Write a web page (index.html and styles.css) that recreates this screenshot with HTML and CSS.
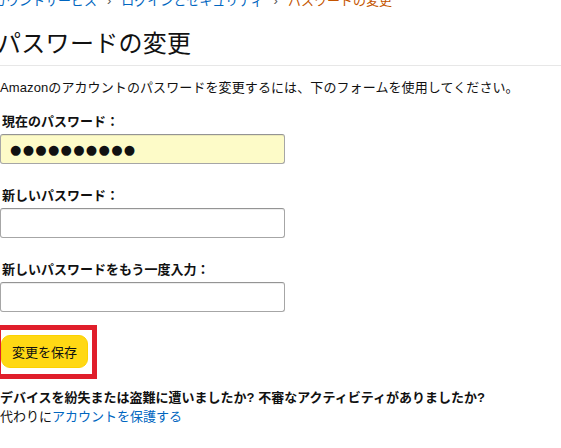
FILE: index.html
```html
<!DOCTYPE html>
<html lang="ja">
<head>
<meta charset="utf-8">
<title>パスワードの変更</title>
<link rel="stylesheet" href="styles.css">
</head>
<body>
<div class="page">
  <nav class="crumbs">
    <a class="crumb" href="#">アカウントサービス</a>
    <span class="sep">›</span>
    <a class="crumb" href="#">ログインとセキュリティ</a>
    <span class="sep">›</span>
    <span class="crumb current">パスワードの変更</span>
  </nav>
  <div class="header">
    <h1 class="title">パスワードの変更</h1>
  </div>
  <p class="desc">Amazonのアカウントのパスワードを変更するには、下のフォームを使用してください。</p>
  <form class="form">
    <label class="label first">現在のパスワード：</label>
    <input class="field filled" type="text" value="●●●●●●●●●●" readonly>
    <label class="label">新しいパスワード：</label>
    <input class="field" type="password">
    <label class="label">新しいパスワードをもう一度入力：</label>
    <input class="field" type="password">
    <div class="save-wrap">
      <button class="save" type="button">変更を保存</button>
      <span class="highlight"></span>
    </div>
  </form>
  <p class="lost">デバイスを紛失または盗難に遭いましたか? 不審なアクティビティがありましたか?</p>
  <p class="protect">代わりに<a href="#" class="link">アカウントを保護する</a></p>
</div>
</body>
</html>
```
FILE: styles.css
```css
html, body {
  margin: 0;
  padding: 0;
  background: #fff;
}
body {
  font-family: "Liberation Sans", "Noto Sans CJK JP", sans-serif;
  font-size: 13px;
  color: #111;
  overflow: hidden;
}
.page {
  width: 600px;
}
.crumbs {
  margin: -9px 0 0 -20px;
  line-height: 19px;
  white-space: nowrap;
  display: flex;
  align-items: center;
}
.crumb {
  color: #0066c0;
  text-decoration: none;
}
.crumb.current {
  color: #c45500;
}
.sep {
  color: #555;
  padding: 0 10px;
}
.header {
  margin-top: 19px;
  border-bottom: 1px solid #e7e7e7;
  padding-bottom: 7px;
}
.title {
  margin: 0 0 0 -3px;
  font-size: 24px;
  font-weight: 400;
  line-height: 29px;
  color: #111;
  letter-spacing: 0.3px;
}
.desc {
  margin: 12px 0 0 0;
  line-height: 19px;
  letter-spacing: 0.1px;
}
.form {
  display: flex;
  flex-direction: column;
  align-items: flex-start;
}
.label {
  display: block;
  font-weight: 700;
  line-height: 19px;
  margin: 22px 0 3px 2px;
}
.label.first {
  margin-top: 15px;
}
.field {
  box-sizing: border-box;
  width: 285px;
  height: 30px;
  margin: 0;
  padding: 3px 7px;
  border: 1px solid #a6a6a6;
  border-top-color: #949494;
  border-radius: 3px;
  background: #fff;
  box-shadow: 0 1px 0 rgba(255,255,255,.5), 0 1px 0 rgba(0,0,0,.07) inset;
  outline: none;
  font-family: "DejaVu Sans", sans-serif;
  font-size: 13px;
  color: #111;
}
.field.filled {
  background: #fdfbc8;
  font-size: 13px;
  letter-spacing: 1.3px;
  padding-left: 9px;
}
.save-wrap {
  position: relative;
  margin-top: 23px;
  margin-left: 1px;
}
.save {
  box-sizing: border-box;
  width: 87px;
  height: 33px;
  border: 1px solid #fcd200;
  border-radius: 9px;
  background: #ffd814;
  color: #0f1111;
  font-family: "Liberation Sans", "Noto Sans CJK JP", sans-serif;
  font-size: 13px;
  padding: 0;
  cursor: pointer;
}
.highlight {
  position: absolute;
  left: -5px;
  top: -10px;
  width: 101px;
  height: 54px;
  box-sizing: border-box;
  border: 5px solid #e01e2b;
  pointer-events: none;
}
.lost {
  margin: 20px 0 0 0;
  font-weight: 700;
  line-height: 19px;
}
.protect {
  margin: 0;
  line-height: 19px;
}
.link {
  color: #0066c0;
  text-decoration: none;
}
```
